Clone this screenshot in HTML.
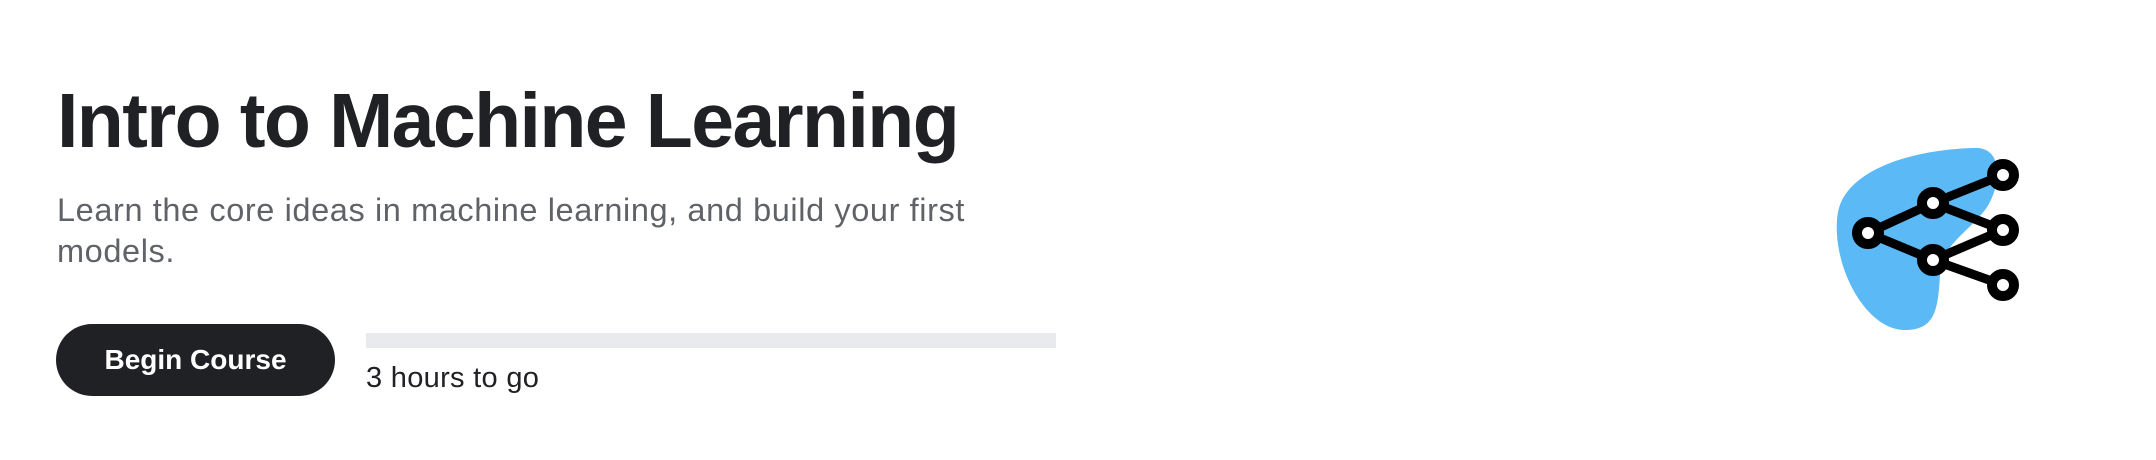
<!DOCTYPE html>
<html><head><meta charset="utf-8"><style>
html,body{margin:0;padding:0;background:#fff;width:2156px;height:460px;overflow:hidden;font-family:"Liberation Sans",Arial,sans-serif}
.t{position:absolute;left:57px;top:76px;font-size:77px;font-weight:bold;color:#202124;letter-spacing:-1.6px;white-space:nowrap;line-height:90px}
.s{position:absolute;left:57px;top:190px;width:960px;font-size:32.5px;letter-spacing:0.6px;line-height:41px;color:#5f6368}
.b{position:absolute;left:56px;top:324px;width:279px;height:72px;border-radius:36px;background:#202124;color:#fff;font-weight:bold;font-size:28px;line-height:72px;text-align:center}
.p{position:absolute;left:366px;top:333px;width:690px;height:15px;background:#e8eaed}
.h{position:absolute;left:366px;top:362px;font-size:29px;letter-spacing:0.3px;color:#202124}
</style></head><body>
<div class="t">Intro to Machine Learning</div>
<div class="s">Learn the core ideas in machine learning, and build your first models.</div>
<div class="b">Begin Course</div>
<div class="p"></div>
<div class="h">3 hours to go</div>
<svg width="2156" height="460" style="position:absolute;left:0;top:0">
<path d="M1845,195 C1870,158 1940,148 1978,148 C2005,150 2000,190 1985,210 C1965,235 1942,245 1940,275 C1938,310 1935,330 1905,330 C1870,330 1840,280 1837,235 C1836,218 1838,205 1845,195 Z" fill="#5bb9f5"/>
<g stroke="#000" stroke-width="9" fill="none" stroke-linecap="round">
<line x1="1868" y1="233" x2="1933" y2="203"/>
<line x1="1868" y1="233" x2="1933" y2="260"/>
<line x1="1933" y1="203" x2="2003" y2="175"/>
<line x1="1933" y1="203" x2="2003" y2="230"/>
<line x1="1933" y1="260" x2="2003" y2="230"/>
<line x1="1933" y1="260" x2="2003" y2="285"/>
</g>
<g stroke="#000" stroke-width="10" fill="#fff">
<circle cx="1868" cy="233" r="11"/><circle cx="1933" cy="203" r="11"/><circle cx="1933" cy="260" r="11"/>
<circle cx="2003" cy="175" r="11"/><circle cx="2003" cy="230" r="11"/><circle cx="2003" cy="285" r="11"/>
</g>
</svg>
</body></html>
